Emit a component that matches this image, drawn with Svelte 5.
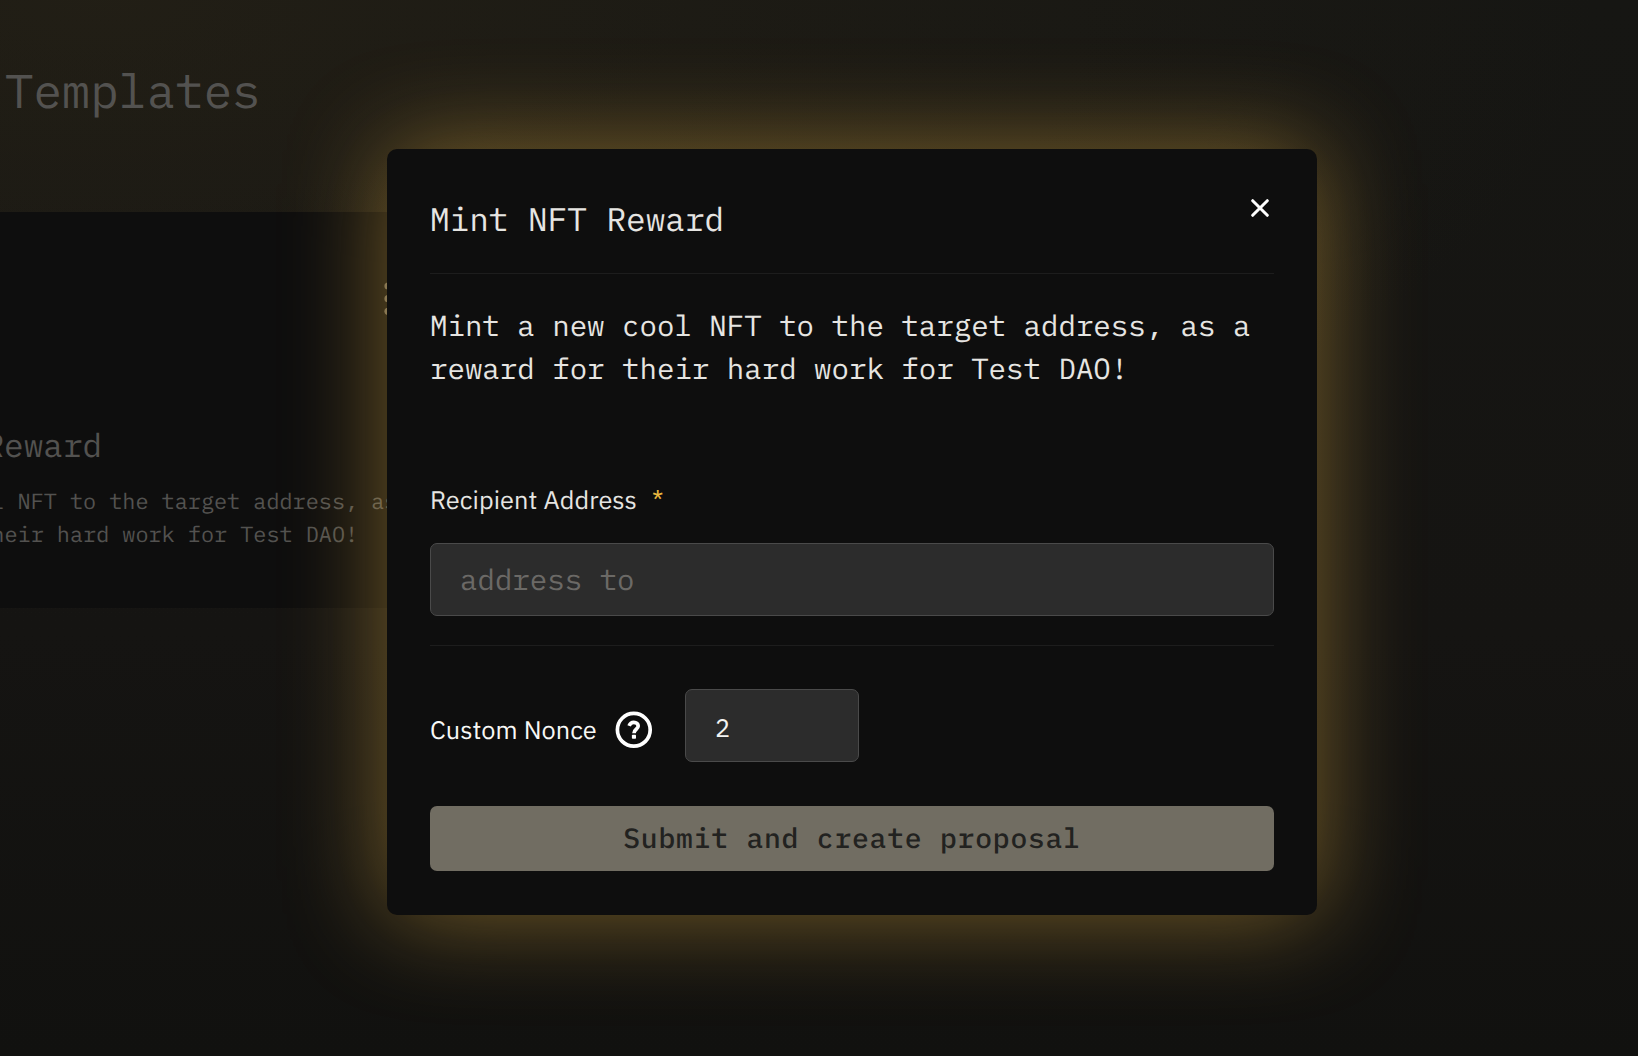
<script>
  let recipient = $state('');
  let nonce = $state('2');
  const description =
    'Mint a new cool NFT to the target address, as a reward for their hard work for Test DAO!';
</script>

<div class="page">
  <main class="backdrop">
    <h1>Templates</h1>
    <article class="card">
      <div class="card-top">
        <svg class="dots" viewBox="0 0 8 34" width="8" height="34">
          <circle cx="4" cy="4" r="3.6" />
          <circle cx="4" cy="16.7" r="3.6" />
          <circle cx="4" cy="29.3" r="3.6" />
        </svg>
      </div>
      <h2>Mint NFT Reward</h2>
      <p>{description}</p>
    </article>
  </main>

  <section class="modal" role="dialog" aria-label="Mint NFT Reward">
    <header>
      <h2>Mint NFT Reward</h2>
      <button class="close" aria-label="Close">
        <svg viewBox="0 0 18 18" width="18" height="18">
          <path d="M1.7 1.7 L16.3 16.3 M16.3 1.7 L1.7 16.3" />
        </svg>
      </button>
    </header>
    <p class="description">{description}</p>
    <label class="field-label" for="recipient">Recipient Address<span>*</span></label>
    <input id="recipient" class="recipient" placeholder="address to" bind:value={recipient} />
    <div class="nonce">
      <label for="nonce">Custom Nonce</label>
      <svg viewBox="0 0 38 38" width="38" height="38">
        <circle cx="18.8" cy="18.8" r="16.4" />
        <path d="M14.1 14.9 C14.9 12.7 16.6 11.3 18.8 11.3 C21.5 11.3 23.2 12.9 23.2 15 C23.2 18.4 19 18.2 19 22.2" />
        <rect x="16.9" y="23.7" width="4.1" height="4" rx="0.8" />
      </svg>
      <input id="nonce" bind:value={nonce} />
    </div>
    <button class="submit" disabled>Submit and create proposal</button>
  </section>
</div>

<style>
  :global(body) {
    background: #11110f;
  }
  .page,
  .page * {
    box-sizing: border-box;
    text-rendering: geometricPrecision;
  }
  .page {
    --mono: 'IBM Plex Mono', 'Liberation Mono', monospace;
    --sans: 'IBM Plex Sans', Roboto, sans-serif;
    display: grid;
    width: 1638px;
    height: 1056px;
    overflow: hidden;
    font-family: var(--mono);
    background:
      radial-gradient(ellipse 1500px 620px at 6% 0%, rgba(54, 45, 26, 0.36), rgba(54, 45, 26, 0) 100%),
      linear-gradient(180deg, #161613 0%, #151412 60%, #11110f 100%);
  }
  h1,
  h2,
  p {
    margin: 0;
    font-weight: 400;
  }
  .backdrop,
  .modal {
    grid-area: 1 / 1;
  }
  .backdrop {
    color: #535250;
  }
  h1 {
    height: 212px;
    padding: 60px 0 0 5px;
    font-size: 47.3px;
    line-height: 64px;
  }
  .card {
    width: 690px;
    height: 396px;
    margin-left: -235px;
    padding: 43px;
    background: #0e0e0e;
  }
  .card-top {
    display: flex;
    justify-content: flex-end;
    height: 168px;
    padding: 27px 20px 0 0;
  }
  .dots {
    fill: #6c6455;
  }
  .card h2 {
    font-size: 32.7px;
    line-height: 43px;
  }
  .card p {
    margin-top: 20px;
    font-size: 21.84px;
    line-height: 33px;
  }
  .modal {
    display: flex;
    flex-direction: column;
    align-self: start;
    width: 930px;
    height: 766px;
    margin: 149px 0 0 387px;
    padding: 43px;
    border-radius: 10px;
    background: #0e0e0e;
    color: #e6e5e2;
    box-shadow: 0 0 100px rgba(250, 193, 73, 0.44);
  }
  header {
    display: flex;
    justify-content: space-between;
    height: 82px;
    border-bottom: 1px solid #1d1d1d;
  }
  header h2 {
    padding-top: 5px;
    font-size: 32.7px;
    line-height: 43px;
  }
  button {
    border: 0;
    padding: 0;
  }
  .close {
    display: grid;
    height: 18px;
    margin: 6.5px 5px 0 0;
    background: none;
  }
  .close path {
    fill: none;
    stroke: #fff;
    stroke-width: 3;
    stroke-linecap: round;
  }
  .description {
    margin-top: 31px;
    font-size: 29.1px;
    line-height: 43px;
  }
  .field-label {
    margin-top: 92px;
    height: 34px;
    font-family: var(--sans);
    font-size: 25.3px;
    letter-spacing: 0.06px;
    line-height: 34px;
  }
  .field-label span {
    margin-left: 15px;
    color: #eab83f;
  }
  input {
    height: 73px;
    padding: 0 0 0 29px;
    border: 1px solid #4a4a4a;
    border-radius: 7px;
    background: #2c2c2c;
    color: #f4f4f2;
    outline: none;
  }
  .recipient {
    width: 844px;
    margin-top: 26px;
    font-family: var(--mono);
    font-size: 29.1px;
  }
  .recipient::placeholder {
    color: #6b6966;
    opacity: 1;
  }
  .nonce {
    display: flex;
    height: 161px;
    margin-top: 29px;
    padding-top: 43px;
    border-top: 1px solid #1d1d1d;
    color: #f8f8f6;
    font-family: var(--sans);
    font-size: 25.3px;
    letter-spacing: 0.06px;
  }
  .nonce label {
    width: 185px;
    padding-top: 24px;
    line-height: 34px;
  }
  .nonce svg {
    margin-top: 22px;
    fill: none;
    stroke: #fff;
    stroke-width: 3.7;
  }
  .nonce rect {
    fill: #fff;
    stroke: none;
  }
  .nonce input {
    width: 174px;
    margin-left: 32px;
    padding-top: 4px;
    font-family: var(--sans);
    font-size: 25.3px;
  }
  .submit {
    height: 65px;
    padding-bottom: 2px;
    border-radius: 7px;
    background: #716d62;
    color: #222220;
    font-family: var(--mono);
    font-size: 28px;
    font-weight: 500;
    letter-spacing: 0.8px;
  }
</style>
